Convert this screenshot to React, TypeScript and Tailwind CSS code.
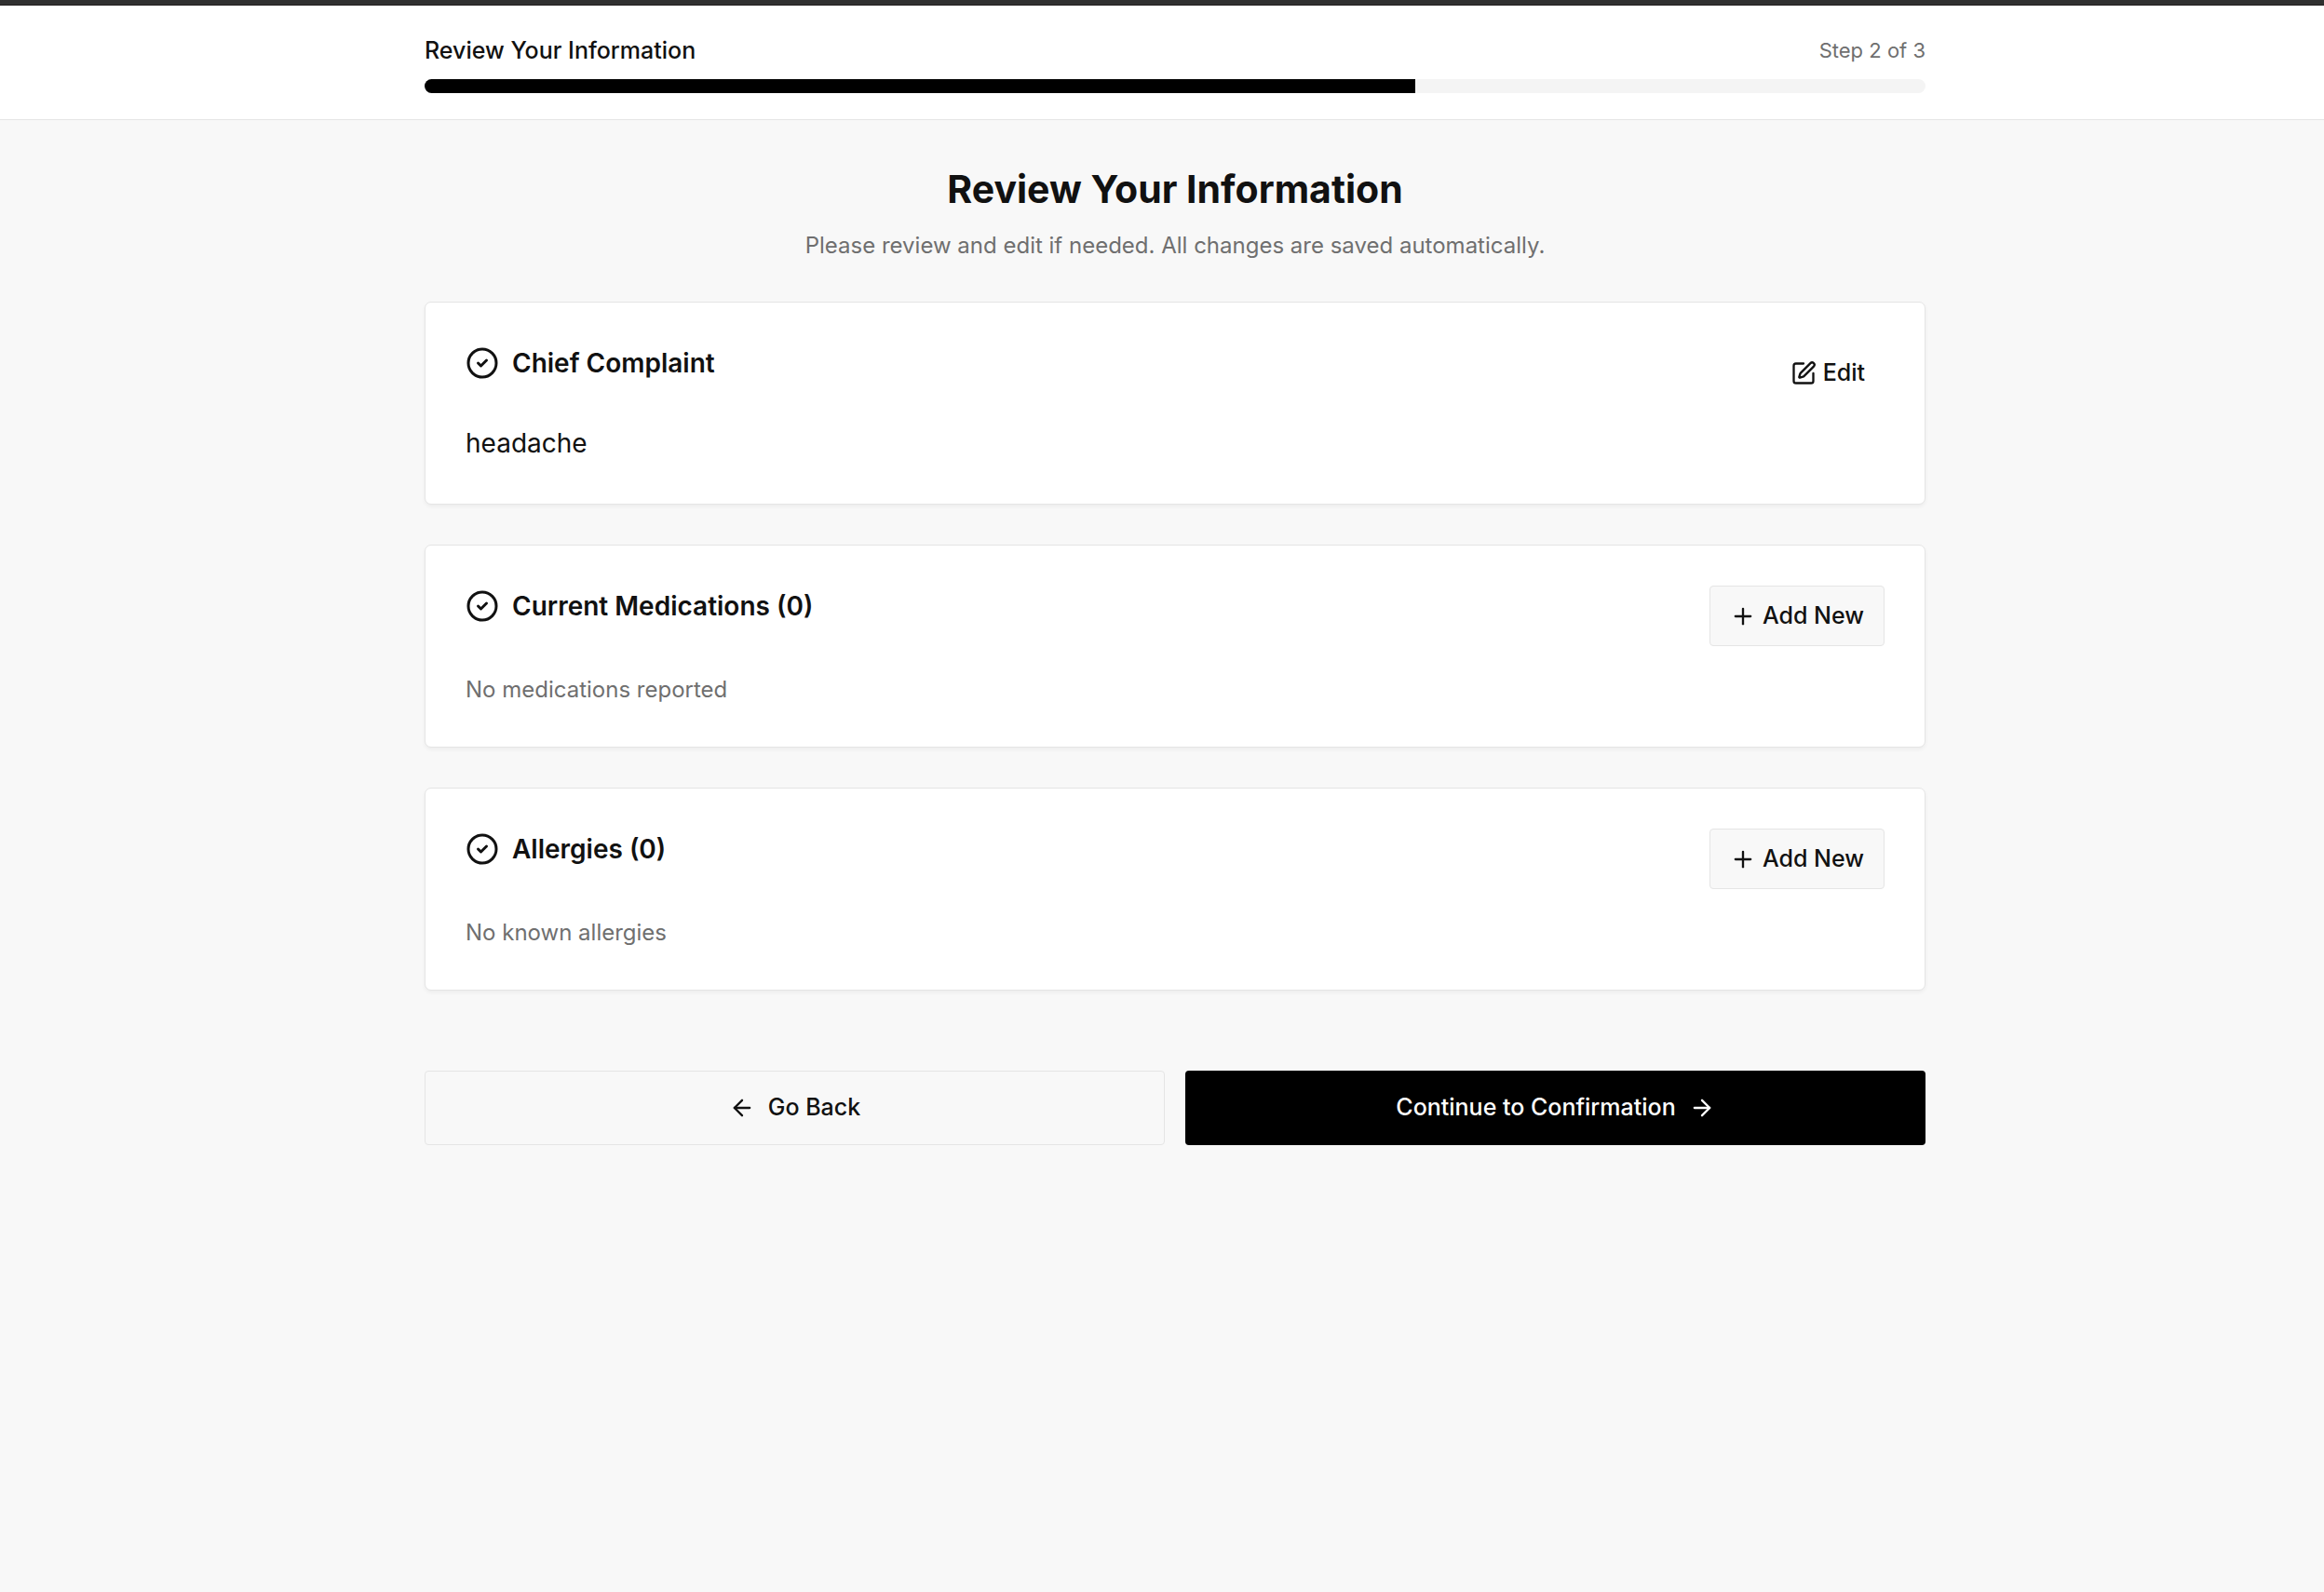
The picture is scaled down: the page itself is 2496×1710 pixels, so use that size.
import React from 'react';
import { ArrowLeft, ArrowRight, CircleCheck, Plus, SquarePen } from 'lucide-react';

const steps = { current: 2, total: 3, percent: 66 };

interface SectionCardProps {
  title: string;
  action: React.ReactNode;
  children: React.ReactNode;
}

const SectionCard: React.FC<SectionCardProps> = ({ title, action, children }) => (
  <section className="bg-white border border-[#e5e5e5] rounded-[7px] p-[43px] shadow-[0_2px_4px_rgba(0,0,0,0.05)]">
    <div className="flex items-start justify-between">
      <h2 className="flex items-center gap-3.5 text-[28px] leading-11 font-semibold">
        <CircleCheck className="w-9 h-9" />
        {title}
      </h2>
      {action}
    </div>
    {children}
  </section>
);

const AddButton: React.FC = () => (
  <button
    type="button"
    className="flex items-center gap-[7px] h-[65px] px-[21px] bg-[#f8f8f8] border border-[#e5e5e5] rounded-sm text-[25px] font-medium"
  >
    <Plus className="w-7 h-7" />
    Add New
  </button>
);

const emptySections = [
  { title: 'Current Medications (0)', message: 'No medications reported' },
  { title: 'Allergies (0)', message: 'No known allergies' }
];

const App: React.FC = () => {
  return (
    <div className="min-h-screen bg-[#f8f8f8] text-[#111111] font-['Inter',sans-serif]">
      <div className="h-1.5 bg-[#303030] border-b border-[#231f20]" />

      {/* Progress header */}
      <header className="bg-white border-b border-[#e5e5e5] pl-7 pt-[30px] pb-7">
        <div className="max-w-[1612px] mx-auto">
          <div className="flex items-center justify-between mb-[13px]">
            <span className="text-[25px] leading-9 font-medium">Review Your Information</span>
            <span className="text-[22px] leading-9 text-[#6f6f6f]">
              Step {steps.current} of {steps.total}
            </span>
          </div>
          <div
            role="progressbar"
            aria-label="Intake progress"
            aria-valuenow={steps.percent}
            className="h-[15px] bg-[#f4f4f4] rounded-full overflow-hidden"
          >
            <div className="h-full bg-black" style={{ width: `${steps.percent}%` }} />
          </div>
        </div>
      </header>

      <main className="pl-7 pt-[45px] pb-11">
        <div className="max-w-[1612px] mx-auto">
          {/* Title */}
          <div className="text-center mb-[42px]">
            <h1 className="text-[41px] leading-[58px] font-bold mb-3.5">Review Your Information</h1>
            <p className="text-[24px] leading-9 text-[#6f6f6f]">
              Please review and edit if needed. All changes are saved automatically.
            </p>
          </div>

          {/* Sections */}
          <div className="space-y-[43px]">
            <SectionCard
              title="Chief Complaint"
              action={
                <button
                  type="button"
                  className="flex items-center gap-[7px] h-[65px] px-[21px] rounded-sm text-[25px] font-medium"
                >
                  <SquarePen className="w-7 h-7" />
                  Edit
                </button>
              }
            >
              <p className="text-[28px] leading-11 mt-[21px]">headache</p>
            </SectionCard>

            {emptySections.map((section) => (
              <SectionCard key={section.title} title={section.title} action={<AddButton />}>
                <p className="text-[24px] leading-9 text-[#6f6f6f] mt-[29px]">{section.message}</p>
              </SectionCard>
            ))}
          </div>

          {/* Navigation */}
          <div className="grid grid-cols-2 gap-[22px] mt-[86px]">
            <button
              type="button"
              className="flex items-center justify-center gap-3.5 h-20 border border-[#e5e5e5] rounded-sm text-[25px] font-medium"
            >
              <ArrowLeft className="w-7 h-7" />
              Go Back
            </button>
            <button
              type="button"
              className="flex items-center justify-center gap-3.5 h-20 bg-black text-white rounded-sm text-[25px] font-medium"
            >
              Continue to Confirmation
              <ArrowRight className="w-7 h-7" />
            </button>
          </div>
        </div>
      </main>
    </div>
  );
};

export default App;
